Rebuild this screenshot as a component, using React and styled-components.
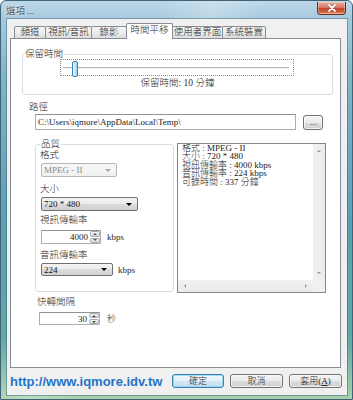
import React from 'react';
import styled, { createGlobalStyle } from 'styled-components';

const FONT = `"Liberation Serif", "Noto Sans CJK TC", serif`;

const GlobalStyle = createGlobalStyle`
  html, body { margin: 0; padding: 0; background: #ffffff; }
  body { width: 353px; height: 400px; overflow: hidden; font-family: ${FONT}; font-weight: 300; color: #2a2a2a; }
  *, *::before, *::after { box-sizing: border-box; }
`;

const Window = styled.div`
  width: 353px;
  height: 400px;
  display: flex;
  flex-direction: column;
  border: 1px solid #3f6476;
  border-radius: 6px 6px 0 0;
  background:
    linear-gradient(115deg, rgba(255,255,255,0) 30%, rgba(255,255,255,0.25) 40%, rgba(255,255,255,0) 50%),
    linear-gradient(180deg, #bcd7e8 0%, #a4c8dc 5%, #7fb3c9 20%, #5c9fb3 55%, #62a7a6 85%, #a6d1ab 100%);
`;

const TitleBar = styled.div`
  height: 18px;
  flex: none;
  display: flex;
  justify-content: space-between;
  align-items: flex-start;
  padding: 0 6px 0 5px;
`;

const Title = styled.span`
  font-family: "Noto Sans CJK TC", "Liberation Sans", sans-serif;
  font-size: 9.5px;
  line-height: 18px;
  color: #1c2a33;
  text-shadow: 0 0 4px rgba(255,255,255,0.9), 0 0 2px rgba(255,255,255,0.9);
`;

const CloseButton = styled.div`
  width: 29px;
  height: 13px;
  margin-top: 1px;
  border: 1px solid #6b2a1e;
  border-top: none;
  border-radius: 0 0 4px 4px;
  background: linear-gradient(180deg, #e9a99b 0%, #d97d68 45%, #c3452a 50%, #cf5a3c 80%, #e89a6f 100%);
  display: flex;
  align-items: center;
  justify-content: center;
  box-shadow: inset 0 0 0 1px rgba(255,255,255,0.35);
`;

const Body = styled.div`
  flex: 1;
  margin: 0 5px 4px 6px;
  background: #f0f0f0;
  display: flex;
  flex-direction: column;
  box-shadow: 0 0 0 1px rgba(50, 90, 110, 0.45);
`;

const TabStrip = styled.div`
  position: relative;
  z-index: 1;
  height: 16px;
  margin: 4px 0 -1px 0;
  padding-left: 7px;
  display: flex;
  align-items: flex-end;
`;

const Tab = styled.div`
  width: ${({ $w }) => $w}px;
  height: ${({ $active }) => ($active ? 16 : 13)}px;
  margin-right: -1px;
  border: 1px solid #898c95;
  border-bottom: ${({ $active }) => ($active ? 'none' : '1px solid #898c95')};
  border-radius: 2px 2px 0 0;
  background: ${({ $active }) =>
    $active ? '#ffffff' : 'linear-gradient(180deg, #f6f6f6 0%, #ececec 50%, #dedede 100%)'};
  position: relative;
  z-index: ${({ $active }) => ($active ? 2 : 1)};
  font-size: 9.5px;
  line-height: ${({ $active }) => ($active ? 13 : 11)}px;
  text-align: center;
  white-space: nowrap;
  color: #2a2a2a;
`;

const Panel = styled.div`
  margin-left: 3px;
  width: 331px;
  height: 330px;
  flex: none;
  border: 1px solid #898c95;
  background: #ffffff;
  display: flex;
  flex-direction: column;
  align-items: flex-start;
`;

const GroupBox = styled.div`
  position: relative;
  width: ${({ $w }) => $w}px;
  height: ${({ $h }) => $h}px;
  margin: ${({ $m }) => $m || '0'};
  border: 1px solid #d5dfe5;
  border-radius: 3px;
  display: flex;
  flex-direction: column;
  align-items: flex-start;
  padding: ${({ $p }) => $p || '0'};
`;

const GroupLabel = styled.span`
  position: absolute;
  top: -7px;
  left: ${({ $l }) => $l}px;
  padding: 0 1px;
  background: #ffffff;
  font-size: 9.5px;
  line-height: 12px;
  color: #2a2a2a;
`;

const SliderFocus = styled.div`
  position: relative;
  width: 234px;
  height: 17px;
  margin: 4px 0 0 37px;
  border: 1px dotted #8a8a8a;
  display: flex;
  align-items: center;
  padding: 0 4px 0 2px;
`;

const SliderTrack = styled.div`
  flex: 1;
  height: 2px;
  margin-top: 1px;
  border-top: 1px solid #b5b9bd;
  border-bottom: 1px solid #eef0f2;
  background: #e0e3e6;
`;

const SliderThumb = styled.div`
  position: absolute;
  left: ${({ $pos }) => $pos}px;
  top: 1px;
  width: 6px;
  height: 16px;
  border: 1px solid #3c7fb1;
  border-radius: 2px;
  background: linear-gradient(90deg, #e8f6fd 0%, #c4e5f6 50%, #98d1ef 100%);
`;

const Caption = styled.div`
  align-self: stretch;
  text-align: center;
  margin-top: 1px;
  font-size: 9.5px;
  line-height: 12px;
  color: #2a2a2a;
`;

const FieldLabel = styled.div`
  font-size: 9.5px;
  line-height: 12px;
  margin: ${({ $m }) => $m || '0'};
  color: #2a2a2a;
  white-space: nowrap;
`;

const Row = styled.div`
  display: flex;
  align-items: ${({ $align }) => $align || 'center'};
  gap: ${({ $gap }) => $gap || 0}px;
  margin: ${({ $m }) => $m || '0'};
`;

const TextBox = styled.div`
  width: ${({ $w }) => $w}px;
  height: 16px;
  border: 1px solid #abadb3;
  border-top-color: #8f9398;
  background: #fff;
  font-size: 9px;
  line-height: 14px;
  padding-left: 2px;
  white-space: nowrap;
  overflow: hidden;
  color: #222;
`;

const ButtonFace = styled.div`
  width: ${({ $w }) => $w}px;
  height: ${({ $h }) => $h}px;
  border: 1px solid ${({ $default }) => ($default ? '#3c7fb1' : '#707070')};
  border-radius: 3px;
  background: ${({ $default }) =>
    $default
      ? 'linear-gradient(180deg, #f1f8fc 0%, #e3f0f8 50%, #d2e7f3 50%, #c6e0ef 100%)'
      : 'linear-gradient(180deg, #f4f4f4 0%, #ebebeb 50%, #dddddd 50%, #d0d0d0 100%)'};
  box-shadow: inset 0 0 0 1px ${({ $default }) => ($default ? 'rgba(140,210,245,0.8)' : 'rgba(255,255,255,0.7)')};
  display: flex;
  align-items: center;
  justify-content: center;
  font-size: 9px;
  line-height: 1;
  color: #2a2a2a;
  white-space: nowrap;
`;

const Underline = styled.span`
  text-decoration: underline;
`;

const Combo = styled.div`
  width: ${({ $w }) => $w}px;
  height: ${({ $h }) => $h || 14}px;
  margin: ${({ $m }) => $m || '0'};
  border: 1px solid ${({ $disabled }) => ($disabled ? '#b5b8bb' : '#707070')};
  border-radius: 2px;
  background: ${({ $disabled }) =>
    $disabled
      ? 'linear-gradient(180deg, #f7f7f7 0%, #f0f0f0 100%)'
      : 'linear-gradient(180deg, #f3f3f3 0%, #ebebeb 50%, #dcdcdc 50%, #d0d0d0 100%)'};
  display: flex;
  align-items: center;
  justify-content: space-between;
  padding: 0 5px 0 2px;
  font-size: 9px;
  color: ${({ $disabled }) => ($disabled ? '#8e8e8e' : '#111')};
  white-space: nowrap;
`;

const Tri = styled.span`
  display: block;
  width: 0;
  height: 0;
  border-style: solid;
  ${({ $dir = 'down', $s = 3, $c = '#000' }) => {
    switch ($dir) {
      case 'up':
        return `border-width: 0 ${$s}px ${$s}px ${$s}px; border-color: transparent transparent ${$c} transparent;`;
      case 'left':
        return `border-width: ${$s}px ${$s}px ${$s}px 0; border-color: transparent ${$c} transparent transparent;`;
      case 'right':
        return `border-width: ${$s}px 0 ${$s}px ${$s}px; border-color: transparent transparent transparent ${$c};`;
      default:
        return `border-width: ${$s}px ${$s}px 0 ${$s}px; border-color: ${$c} transparent transparent transparent;`;
    }
  }}
`;

const Spinner = styled.div`
  width: ${({ $w }) => $w}px;
  height: ${({ $h }) => $h || 14}px;
  border: 1px solid #abadb3;
  border-top-color: #8f9398;
  background: #fff;
  display: flex;
  align-items: stretch;
`;

const SpinText = styled.div`
  flex: 1;
  text-align: right;
  font-size: 9px;
  line-height: 12px;
  padding-right: 2px;
  color: #222;
`;

const SpinButtons = styled.div`
  width: 10px;
  display: flex;
  flex-direction: column;
  gap: 1px;
`;

const SpinHalf = styled.div`
  flex: 1;
  border: 1px solid #a9a9a9;
  border-radius: 2px;
  background: linear-gradient(180deg, #f6f6f6, #dcdcdc);
  display: flex;
  align-items: center;
  justify-content: center;
`;

const Unit = styled.span`
  font-size: 9px;
  color: #2a2a2a;
`;

const InfoBox = styled.div`
  width: 149px;
  height: 150px;
  border: 1px solid #828790;
  background: #fff;
  display: grid;
  grid-template-columns: 1fr 12px;
  grid-template-rows: 1fr 12px;
`;

const InfoText = styled.div`
  padding: 0 0 0 4px;
  font-size: 9px;
  line-height: 8.4px;
  white-space: pre;
  color: #222;
  overflow: hidden;
`;

const VScroll = styled.div`
  background: linear-gradient(90deg, #f2f2f2, #eaeaea);
  display: flex;
  flex-direction: column;
  justify-content: space-between;
  align-items: center;
  padding: 6px 0 6px;
`;

const HScroll = styled.div`
  background: linear-gradient(180deg, #f2f2f2, #eaeaea);
  display: flex;
  justify-content: space-between;
  align-items: center;
  padding: 0 6px;
`;

const ScrollCorner = styled.div`
  background: #f0f0f0;
`;

const Footer = styled.div`
  flex: 1;
  display: flex;
  align-items: flex-start;
  padding: 6px 5px 0 3px;
`;

const Url = styled.span`
  font-family: "Liberation Sans", Arial, sans-serif;
  font-weight: bold;
  font-size: 13px;
  line-height: 15px;
  color: #1f74c9;
  white-space: nowrap;
`;

const ButtonGroup = styled.div`
  margin-left: auto;
  display: flex;
  gap: 6px;
`;

const XIcon = () => (
  <svg width="10" height="8" viewBox="0 0 10 8">
    <path d="M2 1 L8 7 M8 1 L2 7" stroke="#3b0f08" strokeWidth="2.6" strokeLinecap="round" opacity="0.5" />
    <path d="M2 1 L8 7 M8 1 L2 7" stroke="#ffffff" strokeWidth="1.8" strokeLinecap="round" />
  </svg>
);

const tabs = [
  { label: '頻道', w: 32 },
  { label: '視訊/音訊', w: 47 },
  { label: '錄影', w: 36 },
  { label: '時間平移', w: 47, active: true },
  { label: '使用者界面', w: 51 },
  { label: '系統裝置', w: 44 },
];

const infoLines = [
  '格式 : MPEG - II',
  '大小 : 720 * 480',
  '視訊傳輸率 : 4000 kbps',
  '音訊傳輸率 : 224 kbps',
  '可錄時間 : 337 分鐘',
];

const SpinBox = ({ value, w, h }) => (
  <Spinner $w={w} $h={h}>
    <SpinText>{value}</SpinText>
    <SpinButtons>
      <SpinHalf>
        <Tri $dir="up" $s={2} $c="#555" />
      </SpinHalf>
      <SpinHalf>
        <Tri $dir="down" $s={2} $c="#555" />
      </SpinHalf>
    </SpinButtons>
  </Spinner>
);

export default function App() {
  return (
    <>
      <GlobalStyle />
      <Window>
        <TitleBar>
          <Title>選項 ...</Title>
          <CloseButton>
            <XIcon />
          </CloseButton>
        </TitleBar>
        <Body>
          <TabStrip>
            {tabs.map((t) => (
              <Tab key={t.label} $w={t.w} $active={t.active}>
                {t.label}
              </Tab>
            ))}
          </TabStrip>
          <Panel>
            <GroupBox $w={311} $h={41} $m="15px 0 0 11px">
              <GroupLabel $l={1}>保留時間</GroupLabel>
              <SliderFocus>
                <SliderTrack />
                <SliderThumb $pos={11} />
              </SliderFocus>
              <Caption>保留時間: 10 分鐘</Caption>
            </GroupBox>

            <FieldLabel $m="6px 0 0 18px">路徑</FieldLabel>
            <Row $m="1px 0 0 24px" $gap={7} $align="flex-start">
              <TextBox $w={261}>C:\Users\iqmore\AppData\Local\Temp\</TextBox>
              <ButtonFace $w={20} $h={15} style={{ marginTop: 1 }}>...</ButtonFace>
            </Row>

            <Row $m="13px 0 0 24px" $gap={3} $align="flex-start">
              <GroupBox $w={139} $h={148} $m="1px 0 0 0" $p="4px 0 0 4px">
                <GroupLabel $l={4}>品質</GroupLabel>
                <FieldLabel>格式</FieldLabel>
                <Combo $w={76} $m="2px 0 0 1px" $disabled>
                  <span>MPEG - II</span>
                  <Tri $s={3} $c="#a8a8a8" />
                </Combo>
                <FieldLabel $m="6px 0 0 0">大小</FieldLabel>
                <Combo $w={97} $m="2px 0 0 1px">
                  <span>720 * 480</span>
                  <Tri $s={3} />
                </Combo>
                <FieldLabel $m="3px 0 0 0">視訊傳輸率</FieldLabel>
                <Row $m="4px 0 0 1px" $gap={6}>
                  <SpinBox value="4000" w={60} />
                  <Unit>kbps</Unit>
                </Row>
                <FieldLabel $m="5px 0 0 0">音訊傳輸率</FieldLabel>
                <Row $m="2px 0 0 1px" $gap={5}>
                  <Combo $w={72} $h={13}>
                    <span>224</span>
                    <Tri $s={3} />
                  </Combo>
                  <Unit>kbps</Unit>
                </Row>
              </GroupBox>
              <InfoBox>
                <InfoText>{infoLines.join('\n')}</InfoText>
                <VScroll>
                  <Tri $dir="up" $s={2} $c="#9a9a9a" />
                  <Tri $dir="down" $s={2} $c="#9a9a9a" />
                </VScroll>
                <HScroll>
                  <Tri $dir="left" $s={2} $c="#9a9a9a" />
                  <Tri $dir="right" $s={2} $c="#9a9a9a" />
                </HScroll>
                <ScrollCorner />
              </InfoBox>
            </Row>

            <FieldLabel $m="3px 0 0 26px">快轉間隔</FieldLabel>
            <Row $m="4px 0 0 28px" $gap={7}>
              <SpinBox value="30" w={61} h={13} />
              <Unit>秒</Unit>
            </Row>
          </Panel>
          <Footer>
            <Url>http://www.iqmore.idv.tw</Url>
            <ButtonGroup>
              <ButtonFace $w={52} $h={14} $default>確定</ButtonFace>
              <ButtonFace $w={53} $h={14}>取消</ButtonFace>
              <ButtonFace $w={53} $h={14}>
                套用(<Underline>A</Underline>)
              </ButtonFace>
            </ButtonGroup>
          </Footer>
        </Body>
      </Window>
    </>
  );
}
